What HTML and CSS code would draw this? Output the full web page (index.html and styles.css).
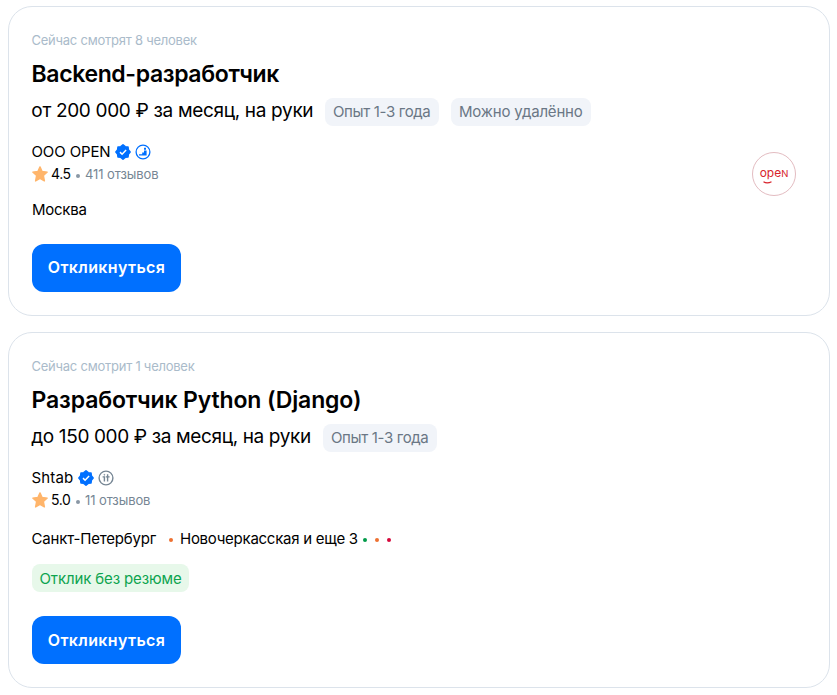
FILE: index.html
```html
<!DOCTYPE html>
<html lang="ru">
<head>
<meta charset="utf-8">
<title>Вакансии</title>
<link rel="stylesheet" href="styles.css">
</head>
<body>
<svg class="defs" aria-hidden="true">
  <symbol id="verified" viewBox="0 0 16 16"><path fill="#0070ff" stroke="#0070ff" stroke-width="1.6" stroke-linejoin="round" d="M8 .9 10.200 2.700 13 3 13.300 5.800 15.100 8 13.300 10.200 13 13 10.200 13.300 8 15.100 5.800 13.300 3 13 2.700 10.200 .9 8 2.700 5.800 3 3 5.800 2.700Z"/><path d="m5 8.1 2.1 2.1 4-4.1" fill="none" stroke="#fff" stroke-width="1.5"/></symbol>
  <symbol id="star" viewBox="0 0 16 16"><path fill="#ffb56b" stroke="#ffb56b" stroke-width="1.4" stroke-linejoin="round" d="m8 .9 2.1 4.6 5.1.6-3.8 3.5 1 5.3L8 12.3l-4.4 2.6 1-5.3L.8 6.100l5.100-.6Z"/></symbol>
</svg>
<main class="list">
  <article class="card">
    <div class="details">
      <div class="views">Сейчас смотрят 8 человек</div>
      <h2 class="title title-backend">Backend-разработчик</h2>
      <div class="pay"><span class="salary salary-from">от 200 000 ₽ за месяц, на руки</span><span class="tag tag-exp">Опыт 1-3 года</span><span class="tag tag-remote">Можно удалённо</span></div>
      <div class="company"><span class="name-open">ООО OPEN</span>
        <svg class="icon"><use href="#verified"/></svg>
        <svg class="icon" viewBox="0 0 16 16"><circle cx="8" cy="8" r="6.9" fill="none" stroke="#0070ff" stroke-width="1.3"/><path fill="#0070ff" d="M4 11.500V10.200H7.200V8.600H9V6.600H11.600V11.500ZM9 3.800h2v2H9Z"/></svg>
      </div>
      <div class="rating"><svg class="icon"><use href="#star"/></svg><b>4.5</b><i></i><span>411 отзывов</span></div>
      <div class="place"><span class="moscow">Москва</span></div>
      <button class="apply raised">Откликнуться</button>
    </div>
    <div class="logo">
      <span>ope<small>N</small></span>
      <svg viewBox="0 0 9 3"><path d="M.5.8Q4 3 8.500.8" fill="none" stroke="#d8232c" stroke-width="1.2"/></svg>
    </div>
  </article>
  <article class="card">
    <div class="details">
      <div class="views">Сейчас смотрит 1 человек</div>
      <h2 class="title title-python">Разработчик Python (Django)</h2>
      <div class="pay"><span class="salary salary-to">до 150 000 ₽ за месяц, на руки</span><span class="tag tag-exp">Опыт 1-3 года</span></div>
      <div class="company"><span class="name-shtab">Shtab</span>
        <svg class="icon"><use href="#verified"/></svg>
        <svg class="icon" viewBox="0 0 16 16" fill="none" stroke="#768694"><circle cx="8" cy="8" r="6.900" stroke-width="1.4"/><path stroke-width="1.400" d="M4.600 6.900H6.400V11.600M9.600 4.300V11.600M7.800 6.900H11.600"/><circle cx="6.300" cy="4.800" r=".4"/></svg>
      </div>
      <div class="rating"><svg class="icon"><use href="#star"/></svg><b>5.0</b><i></i><span>11 отзывов</span></div>
      <div class="place place-metro"><span class="city-spb">Санкт-Петербург</span><i class="dot orange first"></i><span class="station">Новочеркасская и еще 3</span><i class="dot green"></i><i class="dot orange"></i><i class="dot red"></i></div>
      <span class="tag tag-green">Отклик без резюме</span>
      <button class="apply">Откликнуться</button>
    </div>
  </article>
</main>
</body>
</html>
```

FILE: styles.css
```css
* { box-sizing: border-box; }
body { margin: 0; background: #fff; color: #000; font-family: Inter, "Liberation Sans", sans-serif; }
.defs { position: absolute; width: 0; height: 0; }
.list { display: flex; flex-direction: column; gap: 16px; padding: 6px 7px 0 8px; }
.card { display: flex; justify-content: space-between; align-items: flex-start; border: 1px solid #dce3eb; border-radius: 24px; padding: 23px 33px 23px 23px; }
.details { display: flex; flex-direction: column; align-items: flex-start; white-space: nowrap; }
.views { height: 20px; font-size: 13px; line-height: 21px; letter-spacing: -.24px; color: #aabbca; text-indent: -.5px; }
.title { margin: 10px 0 8px; height: 30px; font-size: 23px; line-height: 29px; font-weight: 600; text-indent: -.5px; }
.title-backend { letter-spacing: -.36px; }
.title-python { letter-spacing: -.13px; }
.pay { display: flex; align-items: center; height: 28px; gap: 12px; }
.salary { font-size: 19px; line-height: 26px; height: 28px; text-indent: -.7px; }
.salary-from { width: 281px; letter-spacing: -.33px; }
.salary-to { width: 279px; letter-spacing: -.37px; }
.tag { display: block; height: 28px; padding: 0 8px; border-radius: 8px; background: #f1f4f9; color: #6a7785; font-size: 15px; line-height: 28px; }
.tag-exp { width: 114px; letter-spacing: -.35px; }
.tag-remote { width: 140px; letter-spacing: -.18px; }
.tag-green { width: 157px; background: #e7f8ea; color: #0da44f; margin-top: 15px; line-height: 29px; letter-spacing: -.13px; text-indent: -.5px; }
.company { display: flex; align-items: center; gap: 4px; margin-top: 16px; height: 20px; font-size: 15px; line-height: 20px; }
.name-open { width: 79px; letter-spacing: -.12px; text-indent: -.5px; }
.name-shtab { width: 42px; letter-spacing: .15px; text-indent: -.5px; }
.icon { width: 16px; height: 16px; flex: none; }
.rating { display: flex; align-items: center; margin-top: 2px; height: 20px; font-size: 14px; line-height: 20px; color: #768694; }
.rating b { width: 20px; margin-left: 3px; color: #000; font-weight: 400; letter-spacing: -.4px; }
.rating i { width: 4px; height: 4px; border-radius: 50%; background: #8997a5; margin: 3px 5px 0; }
.rating span { font-size: 13px; letter-spacing: -.1px; }
.place { display: flex; align-items: center; height: 20px; margin-top: 16px; font-size: 15px; line-height: 20px; }
.moscow { letter-spacing: -.25px; }
.city-spb { width: 125px; letter-spacing: -.17px; text-indent: -.5px; }
.station { width: 178px; letter-spacing: -.26px; }
.place-metro { margin-top: 19px; }
.dot { width: 4px; height: 4px; border-radius: 50%; margin: 2px 0 0 8px; }
.dot.first { margin: 2px 7px 0 12px; }
.dot.green { margin-left: 5px; background: #009a49; }
.orange { background: #ee7131; }
.red { background: #d6083b; }
.apply { width: 149px; height: 48px; margin-top: 24px; padding: 0; border: 0; border-radius: 12px; background: #0070ff; color: #fff; font: 600 16px/46px Inter, sans-serif; letter-spacing: .36px; }
.apply.raised { padding-bottom: 2px; }
.logo { display: flex; flex-direction: column; align-items: center; width: 44px; height: 44px; margin-top: 122px; border: 1px solid #e3bcc1; border-radius: 50%; color: #d8232c; font: 400 12px/15px Inter, sans-serif; padding-top: 12px; }
.logo small { font-size: 9.5px; }
.logo svg { width: 9px; height: 3px; margin: 0 13px 0 0; }
```
